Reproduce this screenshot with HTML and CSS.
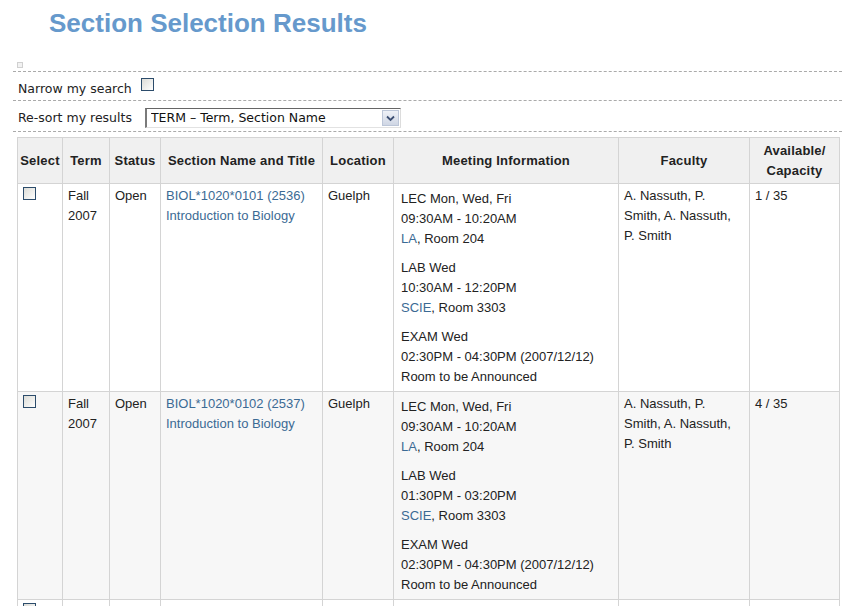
FILE: index.html
```html
<!DOCTYPE html>
<html lang="en">
<head>
<meta charset="utf-8">
<title>Section Selection Results</title>
<link rel="stylesheet" href="styles.css">
</head>
<body>
<h1 class="title">Section Selection Results</h1>
<div class="panel">
  <div class="icon-row"><span class="tiny-img"></span></div>
  <div class="form-row form-row--narrow">
    <span class="label">Narrow my search</span>
    <span class="checkbox checkbox--narrow"></span>
  </div>
  <div class="form-row form-row--sort">
    <span class="label">Re-sort my results</span>
    <span class="select-wrap">
      <select class="select"><option>TERM – Term, Section Name</option></select>
      <span class="select-btn"><svg width="9" height="7" viewBox="0 0 9 7"><path d="M1 1.5 L4.5 5 L8 1.5" fill="none" stroke="#3c4f73" stroke-width="1.8"/></svg></span>
    </span>
  </div>
  <table class="results">
    <colgroup>
      <col class="c-select"><col class="c-term"><col class="c-status"><col class="c-section"><col class="c-location"><col class="c-meeting"><col class="c-faculty"><col class="c-avail">
    </colgroup>
    <thead>
      <tr>
        <th>Select</th><th>Term</th><th>Status</th><th>Section Name and Title</th><th>Location</th><th>Meeting Information</th><th>Faculty</th><th>Available/<br>Capacity</th>
      </tr>
    </thead>
    <tbody>
      <tr>
        <td><span class="checkbox"></span></td>
        <td>Fall<br>2007</td>
        <td>Open</td>
        <td><a class="link" href="#">BIOL*1020*0101 (2536)</a><br><a class="link" href="#">Introduction to Biology</a></td>
        <td>Guelph</td>
        <td class="meeting">
          <p>LEC Mon, Wed, Fri<br>09:30AM - 10:20AM<br><a class="link" href="#">LA</a>, Room 204</p>
          <p>LAB Wed<br>10:30AM - 12:20PM<br><a class="link" href="#">SCIE</a>, Room 3303</p>
          <p>EXAM Wed<br>02:30PM - 04:30PM (2007/12/12)<br>Room to be Announced</p>
        </td>
        <td>A. Nassuth, P. Smith, A. Nassuth, P. Smith</td>
        <td>1 / 35</td>
      </tr>
      <tr class="alt">
        <td><span class="checkbox"></span></td>
        <td>Fall<br>2007</td>
        <td>Open</td>
        <td><a class="link" href="#">BIOL*1020*0102 (2537)</a><br><a class="link" href="#">Introduction to Biology</a></td>
        <td>Guelph</td>
        <td class="meeting">
          <p>LEC Mon, Wed, Fri<br>09:30AM - 10:20AM<br><a class="link" href="#">LA</a>, Room 204</p>
          <p>LAB Wed<br>01:30PM - 03:20PM<br><a class="link" href="#">SCIE</a>, Room 3303</p>
          <p>EXAM Wed<br>02:30PM - 04:30PM (2007/12/12)<br>Room to be Announced</p>
        </td>
        <td>A. Nassuth, P. Smith, A. Nassuth, P. Smith</td>
        <td>4 / 35</td>
      </tr>
      <tr>
        <td><span class="checkbox"></span></td>
        <td>Fall<br>2007</td>
        <td>Open</td>
        <td><a class="link" href="#">BIOL*1020*0103 (2538)</a><br><a class="link" href="#">Introduction to Biology</a></td>
        <td>Guelph</td>
        <td class="meeting">
          <p>LEC Mon, Wed, Fri<br>09:30AM - 10:20AM<br><a class="link" href="#">LA</a>, Room 204</p>
        </td>
        <td>A. Nassuth, P. Smith</td>
        <td>2 / 35</td>
      </tr>
    </tbody>
  </table>
</div>
</body>
</html>
```
FILE: styles.css
```css
* { box-sizing: border-box; }
body {
  margin: 0;
  background: #fff;
  color: #222;
  font-family: "Liberation Sans", Arial, sans-serif;
}
.title {
  margin: 8px 0 0 49px;
  font-size: 26px;
  line-height: 30px;
  font-weight: bold;
  color: #6699cc;
}
.panel {
  margin-left: 13px;
  width: 829px;
}
.icon-row {
  height: 34px;
  display: flex;
  align-items: flex-end;
  padding: 0 0 3px 4px;
  border-bottom: 1px dashed #aaa;
}
.tiny-img {
  width: 6px;
  height: 6px;
  border: 1px solid #d0d0d0;
  background: #f2f2f2;
}
.form-row {
  display: flex;
  align-items: flex-start;
  padding-left: 5px;
  border-bottom: 1px dashed #aaa;
  font-family: "DejaVu Sans", Verdana, sans-serif;
  font-size: 12.5px;
  color: #222;
}
.form-row--narrow { height: 29px; }
.form-row--sort { height: 31px; }
.label {
  line-height: 20px;
  margin-top: 7px;
}
.checkbox {
  display: block;
  width: 13px;
  height: 13px;
  border: 1px solid #2c4c6b;
  background: linear-gradient(135deg, #dcdcd7 0%, #f4f4f2 70%, #ffffff 100%);
}
.checkbox--narrow {
  margin: 6px 0 0 9px;
}
.select-wrap {
  position: relative;
  margin: 7px 0 0 13px;
  width: 256px;
  height: 20px;
}
.select {
  appearance: none;
  -webkit-appearance: none;
  width: 256px;
  height: 20px;
  margin: 0;
  padding: 0 0 0 4px;
  border-style: solid;
  border-width: 1px 1px 1px 2px;
  border-color: #666 #dcdcdc #e2e2e2 #7a7a7a;
  border-radius: 0;
  background: #fff;
  font-family: "DejaVu Sans", Verdana, sans-serif;
  font-size: 12.5px;
  color: #111;
  line-height: 18px;
}
.select-btn {
  position: absolute;
  right: 2px;
  top: 2px;
  width: 17px;
  height: 16px;
  display: flex;
  align-items: center;
  justify-content: center;
  border: 1px solid #bcc6d8;
  background: linear-gradient(#eef1f7, #cfd6e4);
}
.results {
  margin: 5px 0 0 4px;
  width: 822px;
  table-layout: fixed;
  border-collapse: collapse;
  font-size: 13px;
  line-height: 20px;
  color: #222;
}
.c-select { width: 45px; }
.c-term { width: 47px; }
.c-status { width: 51px; }
.c-section { width: 162px; }
.c-location { width: 71px; }
.c-meeting { width: 225px; }
.c-faculty { width: 131px; }
.c-avail { width: 90px; }
.results th,
.results td {
  border: 1px solid #d4d4d4;
  padding: 2px 5px;
  vertical-align: top;
  text-align: left;
}
.results th {
  background: #f0f0f0;
  font-weight: bold;
  letter-spacing: 0.2px;
  text-align: center;
  vertical-align: middle;
  padding: 2px 2px;
  height: 46px;
}
.results tr.alt td { background: #f7f7f7; }
.results td .checkbox { margin-top: 1px; }
.results td.meeting {
  padding: 5px 5px 4px 7px;
}
.meeting p { margin: 0; }
.meeting p + p { margin-top: 9px; }
.link {
  color: #3b6a94;
  text-decoration: none;
}
```
